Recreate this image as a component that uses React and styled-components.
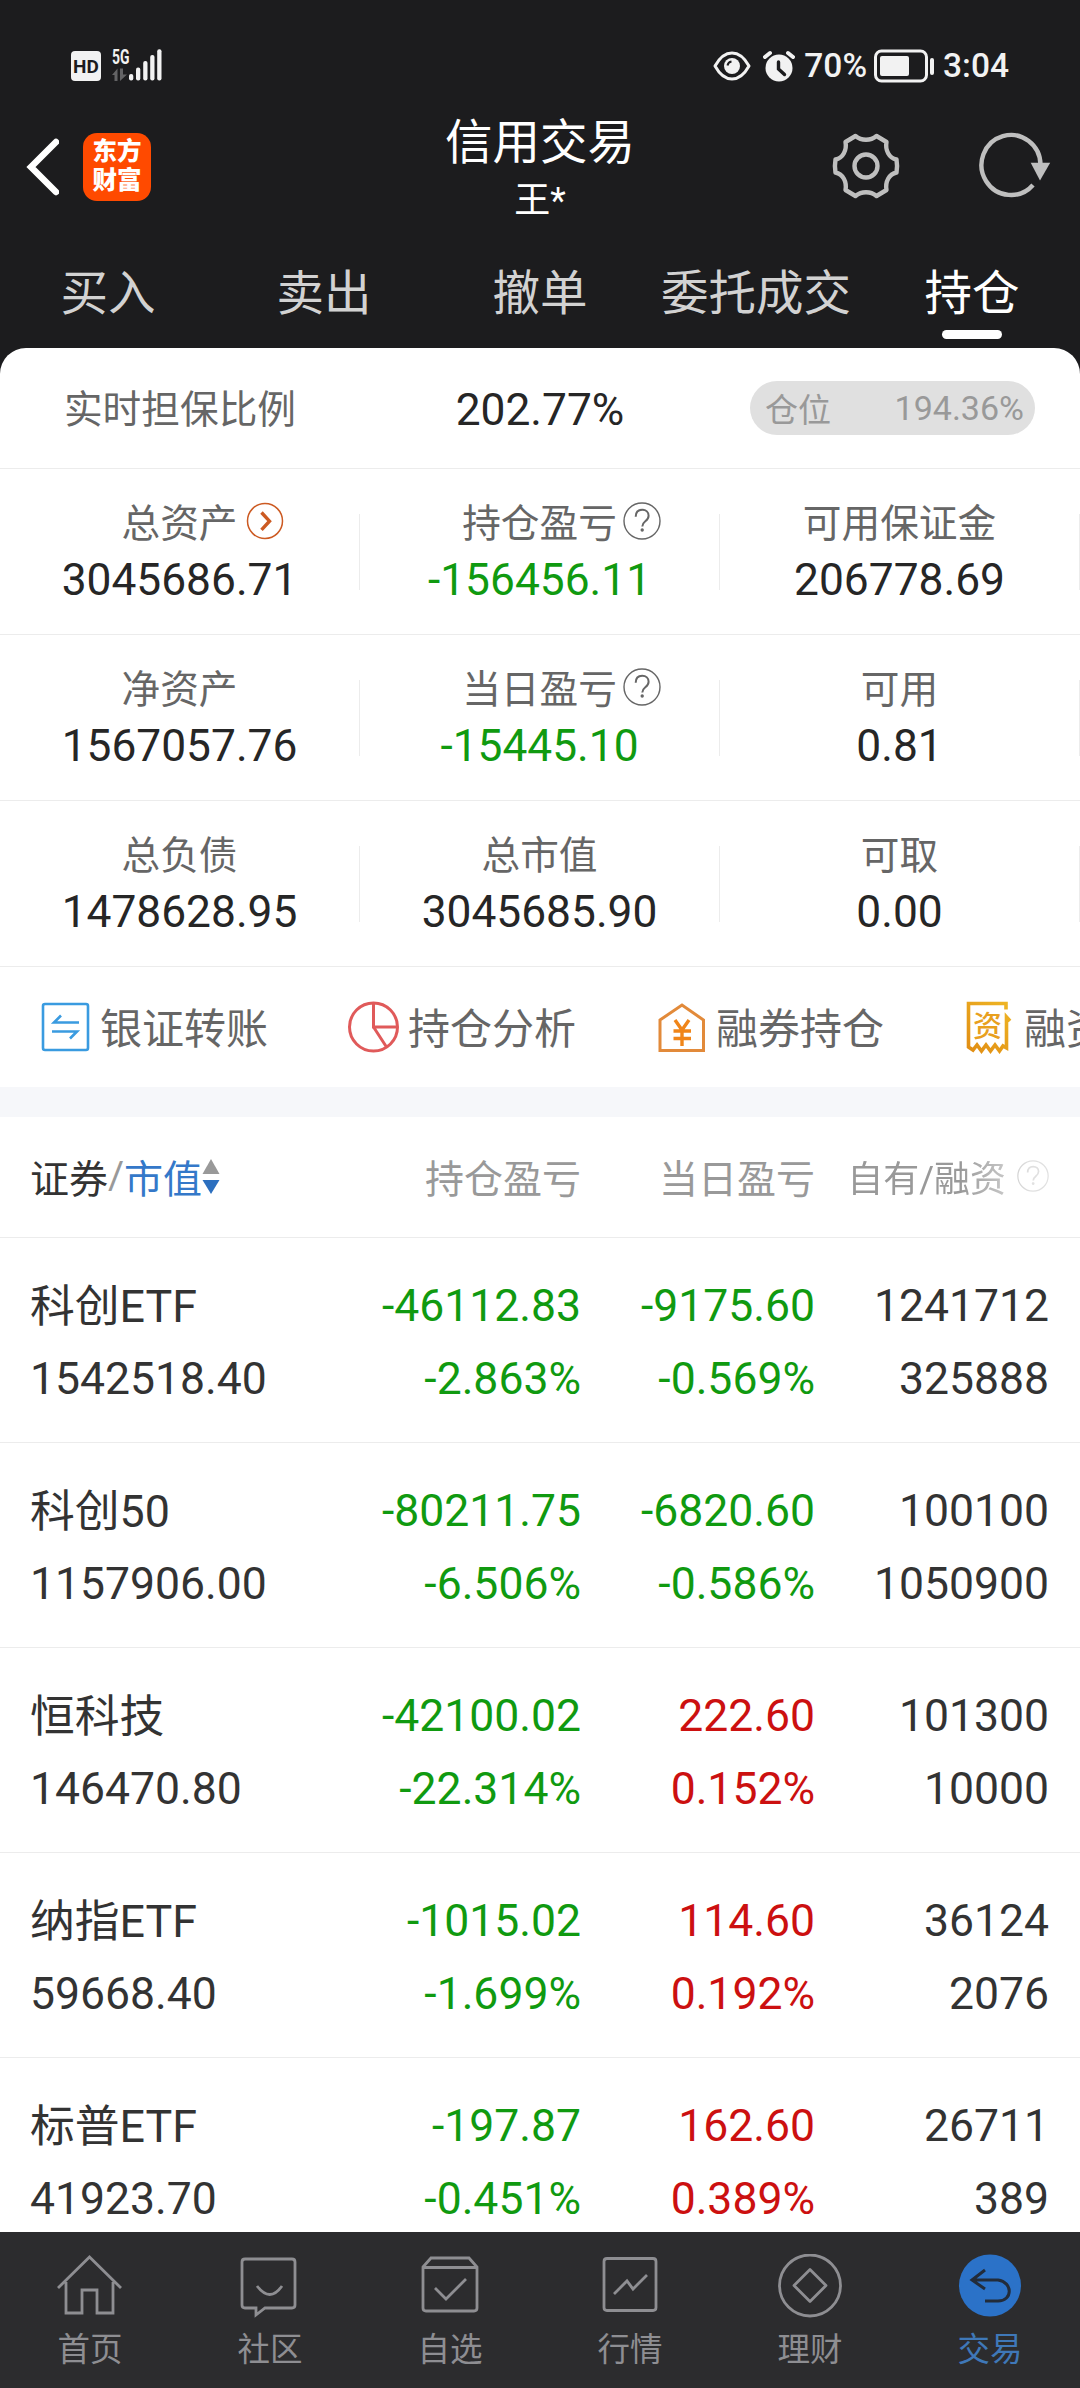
import React from "react";
import styled, { createGlobalStyle, css } from "styled-components";

const GlobalStyle = createGlobalStyle`
  * {
    box-sizing: border-box;
  }

  body {
    margin: 0;
    background: #1c1c1e;
    font-family: Roboto, "Noto Sans CJK SC", sans-serif;
  }

  svg {
    display: block;
    flex: none;
  }
`;

const Screen = styled.div`
  display: flex;
  flex-direction: column;
  width: 1080px;
  height: 2388px;
  overflow: hidden;
  background: #1c1c1e;
`;

const StatusBar = styled.div`
  display: flex;
  align-items: center;
  height: 110px;
  padding: 22px 71px 0 71px;
  color: #f2f2f2;
`;

const HdBadge = styled.span`
  width: 30px;
  height: 30px;
  margin-right: 11px;
  border-radius: 4px;
  background: #f2f2f2;
  color: #1c1c1e;
  font-size: 19px;
  font-weight: 700;
  line-height: 31px;
  text-align: center;
`;

const StatusRight = styled.div`
  display: flex;
  align-items: center;
  margin-left: auto;
`;

const StatusText = styled.span`
  font-size: 33.5px;
  font-weight: 500;
  line-height: 40px;
`;

const AlarmGap = styled.span`
  margin: 0 9px 0 12px;
`;

const BatteryGap = styled.span`
  margin: 0 8px 0 7px;
`;

const TopBar = styled.div`
  display: grid;
  grid-template-columns: 360px 360px 360px;
  height: 140px;
  color: white;
`;

const TopLeft = styled.div`
  display: flex;
  align-items: center;
  padding: 0 0 27px 26px;
`;

const Logo = styled.div`
  width: 68px;
  height: 68px;
  margin-left: 24px;
  padding-top: 4px;
  border-radius: 14px;
  background: #ff4a00;
  font-size: 24.5px;
  font-weight: 900;
  line-height: 29.5px;
  text-align: center;
`;

const TopTitle = styled.div`
  display: flex;
  flex-direction: column;
  align-items: center;
`;

const Title = styled.div`
  margin-top: 5px;
  font-size: 47.5px;
  line-height: 56px;
`;

const Account = styled.div`
  margin-top: 8px;
  font-size: 36px;
  line-height: 44px;
`;

const TopRight = styled.div`
  display: flex;
  align-items: center;
  justify-content: flex-end;
  gap: 78px;
  padding: 0 28px 28px 0;
`;

const Tabs = styled.div`
  display: grid;
  grid-template-columns: repeat(5, 1fr);
  height: 98px;
`;

const Tab = styled.div`
  display: flex;
  flex-direction: column;
  align-items: center;
  padding-top: 14px;
  color: ${props => (props.$active ? "#ffffff" : "#d2d2d2")};
  font-size: 47.5px;
  line-height: 60px;
  white-space: nowrap;

  ${props =>
    props.$active &&
    css`
      &::after {
        content: "";
        width: 60px;
        height: 9px;
        margin-top: 6px;
        border-radius: 5px;
        background: white;
      }
    `}
`;

const Sheet = styled.div`
  flex: 1;
  min-height: 0;
  overflow: hidden;
  border-radius: 26px 26px 0 0;
  background: white;
`;

const RatioRow = styled.div`
  display: grid;
  grid-template-columns: 360px 360px 360px;
  align-items: center;
  height: 121px;
  border-bottom: 1px solid #ececec;
  text-align: center;
`;

const Label = styled.span`
  position: relative;
  color: #666666;
  font-size: 38.7px;
  line-height: 46px;
`;

const Amount = styled.span`
  color: ${props => props.$color || "#262626"};
  font-size: 44.3px;
  line-height: 52px;

  ${RatioRow} > & {
    padding-top: 3px;
  }
`;

const RatioLabel = styled(Label)`
  padding-top: 3px;
`;

const PositionPill = styled.div`
  display: flex;
  align-items: center;
  justify-content: space-between;
  width: 285px;
  height: 54px;
  margin-left: 30px;
  padding: 0 11px 1px 15px;
  border-radius: 27px;
  background: #e0e0e0;
  color: #999999;
  font-size: 33px;
`;

const PositionValue = styled.span`
  font-size: 34px;
`;

const StatsRow = styled.div`
  display: grid;
  grid-template-columns: 360px 360px 360px;
  align-items: center;
  height: 166px;
  border-bottom: 1px solid #ececec;
`;

const Stat = styled.div`
  display: flex;
  flex-direction: column;
  align-items: center;
  height: 76px;
  border-right: 1px solid #ececec;

  ${Label} {
    margin-top: -13px;
  }

  ${Amount} {
    margin-top: 7px;
  }
`;

/* hangs off the label so that the label text itself stays centred */
const LabelIcon = styled.span`
  position: absolute;
  left: 100%;
  top: 1px;
  margin-left: ${props => props.$gap}px;
`;

const Actions = styled.div`
  display: flex;
  height: 120px;
  overflow: hidden;
`;

const Action = styled.div`
  display: flex;
  flex: none;
  align-items: center;
  width: 308px;
  padding-left: 39px;
  color: #666666;
  font-size: 42px;
  white-space: nowrap;

  svg {
    margin-right: 7px;
  }
`;

const ActionText = styled.span`
  padding-bottom: 4px;
`;

const Band = styled.div`
  height: 30px;
  background: #f6f7fa;
`;

const columns = css`
  display: grid;
  grid-template-columns: 300px 251px 234px 234px;
  padding-left: 30px;
`;

const TableHead = styled.div`
  ${columns}
  align-items: center;
  height: 121px;
  padding-bottom: 2px;
  border-bottom: 1px solid #ececec;
  color: #999999;
  font-size: 39px;
`;

const HeadCell = styled.div`
  display: flex;
  align-items: center;
  justify-content: ${props => (props.$first ? "flex-start" : "flex-end")};
  white-space: nowrap;
`;

const Dark = styled.span`
  color: #333333;
`;

const Sorted = styled.span`
  color: #3478c9;
`;

/* the last heading fades out towards the edge */
const FadeHead = styled(HeadCell)`
  gap: 11px;
  font-size: 36px;
  mask-image: linear-gradient(to right, #000 62%, rgba(0, 0, 0, 0.3) 92%);
`;

const Holding = styled.div`
  ${columns}
  height: 205px;
  padding-top: 32px;
  border-bottom: 1px solid #ececec;
`;

const Cell = styled.div`
  display: flex;
  flex-direction: column;
  align-items: ${props => (props.$first ? "flex-start" : "flex-end")};
  color: ${props => props.$color || "#333333"};
  font-size: 44.5px;
  line-height: 73px;
  white-space: nowrap;
`;

const Name = styled.span`
  font-size: 44.8px;
`;

const NavBar = styled.div`
  display: grid;
  flex: none;
  grid-template-columns: repeat(6, 1fr);
  height: 156px;
  background: #2c2c2e;
`;

const NavItem = styled.div`
  display: flex;
  flex-direction: column;
  align-items: center;
  padding-top: 22px;
  color: ${props => (props.$active ? "#3f78b8" : "#8e8e92")};
  font-size: 32.5px;
  line-height: 40px;

  svg {
    margin-bottom: 10px;
  }
`;

const GREEN = "#109a10";
const RED = "#cc1010";

const HelpIcon = ({ size = 38, color = "#666666" }) => (
  <svg width={size} height={size} viewBox="0 0 38 38" fill="none" stroke={color} strokeWidth="1.4">
    <circle cx="19" cy="19" r="18" />
    <path d="M12.7 14.8c0-4.4 2.6-7 6.5-7s6.4 2.5 6.4 5.9c0 2.8-1.5 4.2-3.3 5.6-2.1 1.7-3 2.7-3 5.1" strokeWidth="2" />
    <circle cx="19.2" cy="28" r="1" fill={color} />
  </svg>
);

const MoreIcon = () => (
  <svg width="38" height="38" viewBox="0 0 38 38" fill="none" stroke="#cc5a22">
    <circle cx="19" cy="19" r="17.5" strokeWidth="1.5" />
    <path d="M15.5 10.5l8 8.7-8 8.7" strokeWidth="3.4" />
  </svg>
);

const SignalIcon = () => (
  <svg width="52" height="34" viewBox="0 0 52 34" fill="#f2f2f2">
    <text x="0" y="14.5" fontSize="19.5" fontWeight="700" textLength="17.5" lengthAdjust="spacingAndGlyphs">5G</text>
    <path d="M0 26l5.500-6.500v12.500h-3v-6zM8 19.500h3v6h4L8 32z" fill="#636365" />
    <rect x="17" y="25" width="4.300" height="6.500" rx="2" />
    <rect x="24" y="18.500" width="4.300" height="13" rx="2" />
    <rect x="31.200" y="12" width="4.300" height="19.500" rx="2" />
    <rect x="38.200" y="6" width="4.300" height="25.500" rx="2" />
    <rect x="45.200" y="0.300" width="4.300" height="31.200" rx="2" />
  </svg>
);

const EyeIcon = () => (
  <svg width="38" height="30" viewBox="0 0 38 30" fill="none" stroke="#f2f2f2" strokeWidth="3">
    <path d="M2 15C7 6 12 2 19 2s12 4 17 13c-5 9-10 13-17 13S7 24 2 15z" strokeLinejoin="round" />
    <circle cx="19" cy="15" r="8" fill="#f2f2f2" stroke="none" />
    <path d="M14.5 14.5a5 5 0 0 1 4-4" stroke="#1c1c1e" strokeWidth="2" />
  </svg>
);

const AlarmIcon = () => (
  <svg width="32" height="32" viewBox="0 0 32 32" fill="none" strokeLinecap="round">
    <circle cx="16" cy="18" r="13.5" fill="#f2f2f2" />
    <path d="M2 7l5-4M30 7l-5-4" stroke="#f2f2f2" strokeWidth="4" />
    <path d="M15.5 12v7l6 5.5" stroke="#1c1c1e" strokeWidth="3.4" />
  </svg>
);

const BatteryIcon = () => (
  <svg width="61" height="34" viewBox="0 0 61 34" fill="none">
    <rect x="1.5" y="2" width="51" height="30" rx="6" stroke="#f2f2f2" strokeWidth="3" />
    <rect x="6" y="7" width="29" height="20" rx="2" fill="#f2f2f2" />
    <rect x="56" y="9" width="4" height="17" rx="2" fill="#f2f2f2" />
  </svg>
);

const BackIcon = () => (
  <svg width="33" height="58" viewBox="0 0 33 58" fill="none" stroke="white" strokeWidth="6.5">
    <path d="M30 4L5 29l25 25" strokeLinecap="round" strokeLinejoin="miter" />
  </svg>
);

const GearIcon = () => (
  <svg width="68" height="68" viewBox="0 0 68 68" fill="none" stroke="#bfbfbf" strokeWidth="4.4">
    <path
      d="M23.5 4C29.5 9 38.5 9 44.5 4L54.500 10C53 18 57 26 64.500 27.500C65.300 32 65.300 36 64.500 40.500C57 42 53 50 54.500 58L44.500 64C38.500 59 29.500 59 23.500 64L13.500 58C15 50 11 42 3.500 40.500C2.700 36 2.700 32 3.500 27.500C11 26 15 18 13.500 10Z"
      strokeLinejoin="round"
    />
    <circle cx="34" cy="34" r="11.500" />
  </svg>
);

const RefreshIcon = () => (
  <svg width="74" height="68" viewBox="0 0 74 68" fill="none">
    <path d="M62.500 33A29.500 30 0 1 0 55 53" stroke="#bfbfbf" strokeWidth="4.400" />
    <path d="M52.700 30.700h19.500L62 48.500z" fill="#bfbfbf" />
  </svg>
);

const actionIcons = {
  transfer: (
    <svg width="54" height="54" viewBox="0 0 54 54" fill="none" stroke="#3a9be0" strokeWidth="2.6">
      <rect x="4" y="4" width="45" height="46" rx="2" />
      <path d="M40 22.500H15l7-7M13 31.500h25l-7 7" />
    </svg>
  ),
  pie: (
    <svg width="54" height="54" viewBox="0 0 54 54" fill="none" stroke="#e05a5a" strokeWidth="3">
      <circle cx="26.500" cy="27" r="24" />
      <path d="M26.500 3v24h24M26.500 27l13 20" />
    </svg>
  ),
  house: (
    <svg width="54" height="54" viewBox="0 0 54 54" fill="none" stroke="#e28a3a" strokeWidth="3">
      <path d="M5 20L27 5l21.500 15v30.500H5z" />
      <path d="M20 20l7 10 7-10M27 30v16M18.500 31h17.500M18.500 38.500h17.500" stroke="#f08519" strokeWidth="3.400" />
    </svg>
  ),
  bill: (
    <svg width="54" height="54" viewBox="0 0 54 54" fill="none" stroke="url(#gold)" strokeWidth="3.600">
      <defs>
        <linearGradient id="gold" x1="0" y1="54" x2="50" y2="0" gradientUnits="userSpaceOnUse">
          <stop offset="0" stopColor="#e08a12" />
          <stop offset="1" stopColor="#efb826" />
        </linearGradient>
      </defs>
      <path d="M43 9.500V3.500H5.500V47l4.500 3 4-5 4.500 6 4.500-6 4.500 6 4.500-6 4.500 6 3.500-5 3.500 2V17l3.500 4" />
      <text x="10" y="37" fontSize="29" fontWeight="500" fill="#e8a01e" stroke="none">资</text>
    </svg>
  ),
};

const SortIcon = () => (
  <svg width="18" height="38" viewBox="0 0 18 38">
    <path d="M9 2l8.500 15H.5z" fill="#999999" />
    <path d="M9 37L.5 23h17z" fill="#2c6fbf" />
  </svg>
);

const navIcons = {
  home: <path d="M4 34L35.500 3 67 34M12 28v31h16V36h15v23h16V28" />,
  chat: <path d="M11 5h47q3 0 3 3v43q0 3-3 3H31l-9 7v-7H11q-3 0-3-3V8q0-3 3-3zM23 32q13 17 25 0" />,
  pick: <path d="M9 13l8-9h38l8 9v41q0 3-3 3H12q-3 0-3-3zM9 13.500h54M21 34l11 11 20-20" />,
  chart: <path d="M13 4.500h46q3 0 3 3v46q0 3-3 3H13q-3 0-3-3v-46q0-3 3-3zM20 40l13-13 6 8 14-14" />,
  wealth: (
    <>
      <circle cx="36" cy="31.500" r="30.500" />
      <path d="M36 15.500l16 16-16 16-16-16z" strokeLinejoin="round" />
    </>
  ),
  trade: (
    <>
      <circle cx="36" cy="31.500" r="31" fill="#2b72c8" stroke="none" />
      <path d="M31 16L18 26l13 9M18 26h26c15 2 15 21 0 21H31" stroke="#222c3a" strokeWidth="3" />
    </>
  ),
};

const tabs = ["买入", "卖出", "撤单", "委托成交", "持仓"];

const stats = [
  [
    { label: "总资产", value: "3045686.71", icon: <MoreIcon />, gap: 8 },
    { label: "持仓盈亏", value: "-156456.11", color: GREEN, icon: <HelpIcon />, gap: 6 },
    { label: "可用保证金", value: "206778.69" },
  ],
  [
    { label: "净资产", value: "1567057.76" },
    { label: "当日盈亏", value: "-15445.10", color: GREEN, icon: <HelpIcon />, gap: 6 },
    { label: "可用", value: "0.81" },
  ],
  [
    { label: "总负债", value: "1478628.95" },
    { label: "总市值", value: "3045685.90" },
    { label: "可取", value: "0.00" },
  ],
];

const actions = [
  { icon: "transfer", text: "银证转账" },
  { icon: "pie", text: "持仓分析" },
  { icon: "house", text: "融券持仓" },
  { icon: "bill", text: "融资持仓" },
];

const holdings = [
  { name: "科创ETF", value: "1542518.40", total: ["-46112.83", "-2.863%"], day: ["-9175.60", "-0.569%"], own: ["1241712", "325888"] },
  { name: "科创50", value: "1157906.00", total: ["-80211.75", "-6.506%"], day: ["-6820.60", "-0.586%"], own: ["100100", "1050900"] },
  { name: "恒科技", value: "146470.80", total: ["-42100.02", "-22.314%"], day: ["222.60", "0.152%"], own: ["101300", "10000"] },
  { name: "纳指ETF", value: "59668.40", total: ["-1015.02", "-1.699%"], day: ["114.60", "0.192%"], own: ["36124", "2076"] },
  { name: "标普ETF", value: "41923.70", total: ["-197.87", "-0.451%"], day: ["162.60", "0.389%"], own: ["26711", "389"] },
];

const navItems = [
  { icon: "home", text: "首页" },
  { icon: "chat", text: "社区" },
  { icon: "pick", text: "自选" },
  { icon: "chart", text: "行情" },
  { icon: "wealth", text: "理财" },
  { icon: "trade", text: "交易", active: true },
];

const signColor = value => (value.startsWith("-") ? GREEN : RED);

const Pair = ({ values, color }) => (
  <Cell $color={color}>
    <span>{values[0]}</span>
    <span>{values[1]}</span>
  </Cell>
);

const App = () => {
  return (
    <Screen>
      <GlobalStyle />
      <StatusBar>
        <HdBadge>HD</HdBadge>
        <SignalIcon />
        <StatusRight>
          <EyeIcon />
          <AlarmGap><AlarmIcon /></AlarmGap>
          <StatusText>70%</StatusText>
          <BatteryGap><BatteryIcon /></BatteryGap>
          <StatusText>3:04</StatusText>
        </StatusRight>
      </StatusBar>

      <TopBar>
        <TopLeft>
          <BackIcon />
          <Logo>东方<br />财富</Logo>
        </TopLeft>
        <TopTitle>
          <Title>信用交易</Title>
          <Account>王*</Account>
        </TopTitle>
        <TopRight>
          <GearIcon />
          <RefreshIcon />
        </TopRight>
      </TopBar>

      <Tabs>
        {tabs.map(tab => (
          <Tab key={tab} $active={tab === "持仓"}>{tab}</Tab>
        ))}
      </Tabs>

      <Sheet>
        <RatioRow>
          <RatioLabel>实时担保比例</RatioLabel>
          <Amount>202.77%</Amount>
          <PositionPill>
            <span>仓位</span>
            <PositionValue>194.36%</PositionValue>
          </PositionPill>
        </RatioRow>

        {stats.map((row, i) => (
          <StatsRow key={i}>
            {row.map(stat => (
              <Stat key={stat.label}>
                <Label>
                  {stat.label}
                  {stat.icon && <LabelIcon $gap={stat.gap}>{stat.icon}</LabelIcon>}
                </Label>
                <Amount $color={stat.color}>{stat.value}</Amount>
              </Stat>
            ))}
          </StatsRow>
        ))}

        <Actions>
          {actions.map(action => (
            <Action key={action.text}>
              {actionIcons[action.icon]}
              <ActionText>{action.text}</ActionText>
            </Action>
          ))}
        </Actions>
        <Band />

        <TableHead>
          <HeadCell $first>
            <Dark>证券</Dark>/<Sorted>市值</Sorted>
            <SortIcon />
          </HeadCell>
          <HeadCell>持仓盈亏</HeadCell>
          <HeadCell>当日盈亏</HeadCell>
          <FadeHead>
            自有/融资
            <HelpIcon size={32} color="#999999" />
          </FadeHead>
        </TableHead>

        {holdings.map(item => (
          <Holding key={item.name}>
            <Cell $first>
              <Name>{item.name}</Name>
              <span>{item.value}</span>
            </Cell>
            <Pair values={item.total} color={signColor(item.total[0])} />
            <Pair values={item.day} color={signColor(item.day[0])} />
            <Pair values={item.own} />
          </Holding>
        ))}
      </Sheet>

      <NavBar>
        {navItems.map(item => (
          <NavItem key={item.text} $active={item.active}>
            <svg width="72" height="66" viewBox="0 0 72 66" fill="none" stroke="#8e8e92" strokeWidth="2.8">
              {navIcons[item.icon]}
            </svg>
            {item.text}
          </NavItem>
        ))}
      </NavBar>
    </Screen>
  );
};

export default App;
